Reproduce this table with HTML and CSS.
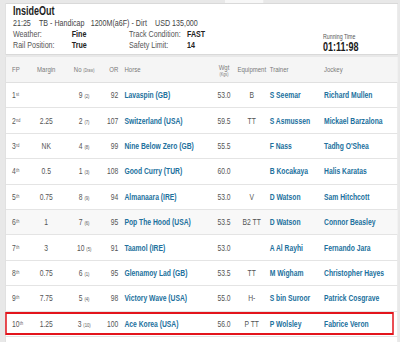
FILE: index.html
```html
<!DOCTYPE html>
<html>
<head>
<meta charset="utf-8">
<link rel="stylesheet" href="styles.css">
</head>
<body>
<div class="viewport">
<div class="page">
  <div class="tabs"><span class="tab-gap"></span></div>
  <header class="race">
    <div class="race-info">
      <h1 class="title">InsideOut</h1>
      <div class="meta">
        <span class="m1">21:25</span><span class="m2">TB - Handicap</span><span class="m3">1200M(a6F) - Dirt</span><span>USD 135,000</span>
      </div>
      <div class="cond">
        <span class="lbl">Weather:</span><span class="val">Fine</span><span class="lbl">Track Condition:</span><span class="val">FAST</span>
        <span class="lbl">Rail Position:</span><span class="val">True</span><span class="lbl">Safety Limit:</span><span class="val">14</span>
      </div>
    </div>
    <div class="run">
      <div class="run-label">Running Time</div>
      <div class="run-time">01:11:98</div>
    </div>
  </header>
  <section class="results">
    <div class="row head">
      <span class="c-fp">FP</span>
      <span class="c-mg">Margin</span>
      <span class="c-no">No <small>(Draw)</small></span>
      <span class="c-or">OR</span>
      <span class="c-horse">Horse</span>
      <span class="c-wgt"><span class="stack">Wgt<small>(Kgs)</small></span></span>
      <span class="c-eq">Equipment</span>
      <span class="c-tr">Trainer</span>
      <span class="c-jk">Jockey</span>
    </div>
    <div class="row">
      <span class="c-fp">1<sup>st</sup></span><span class="c-mg"></span><span class="c-no">9 <small>(2)</small></span><span class="c-or">92</span>
      <span class="c-horse link">Lavaspin (GB)</span><span class="c-wgt">53.0</span><span class="c-eq">B</span>
      <span class="c-tr link">S Seemar</span><span class="c-jk link">Richard Mullen</span>
    </div>
    <div class="row">
      <span class="c-fp">2<sup>nd</sup></span><span class="c-mg">2.25</span><span class="c-no">2 <small>(7)</small></span><span class="c-or">107</span>
      <span class="c-horse link">Switzerland (USA)</span><span class="c-wgt">59.5</span><span class="c-eq">TT</span>
      <span class="c-tr link">S Asmussen</span><span class="c-jk link">Mickael Barzalona</span>
    </div>
    <div class="row">
      <span class="c-fp">3<sup>rd</sup></span><span class="c-mg">NK</span><span class="c-no">4 <small>(8)</small></span><span class="c-or">99</span>
      <span class="c-horse link">Nine Below Zero (GB)</span><span class="c-wgt">55.5</span><span class="c-eq"></span>
      <span class="c-tr link">F Nass</span><span class="c-jk link">Tadhg O'Shea</span>
    </div>
    <div class="row">
      <span class="c-fp">4<sup>th</sup></span><span class="c-mg">0.5</span><span class="c-no">1 <small>(3)</small></span><span class="c-or">108</span>
      <span class="c-horse link">Good Curry (TUR)</span><span class="c-wgt">60.0</span><span class="c-eq"></span>
      <span class="c-tr link">B Kocakaya</span><span class="c-jk link">Halis Karatas</span>
    </div>
    <div class="row">
      <span class="c-fp">5<sup>th</sup></span><span class="c-mg">0.75</span><span class="c-no">8 <small>(9)</small></span><span class="c-or">94</span>
      <span class="c-horse link">Almanaara (IRE)</span><span class="c-wgt">53.0</span><span class="c-eq">V</span>
      <span class="c-tr link">D Watson</span><span class="c-jk link">Sam Hitchcott</span>
    </div>
    <div class="row shaded">
      <span class="c-fp">6<sup>th</sup></span><span class="c-mg">1</span><span class="c-no">7 <small>(6)</small></span><span class="c-or">95</span>
      <span class="c-horse link">Pop The Hood (USA)</span><span class="c-wgt">53.5</span><span class="c-eq">B2 TT</span>
      <span class="c-tr link">D Watson</span><span class="c-jk link">Connor Beasley</span>
    </div>
    <div class="row">
      <span class="c-fp">7<sup>th</sup></span><span class="c-mg">3</span><span class="c-no">10 <small>(5)</small></span><span class="c-or">91</span>
      <span class="c-horse link">Taamol (IRE)</span><span class="c-wgt">53.0</span><span class="c-eq"></span>
      <span class="c-tr link">A Al Rayhi</span><span class="c-jk link">Fernando Jara</span>
    </div>
    <div class="row">
      <span class="c-fp">8<sup>th</sup></span><span class="c-mg">0.75</span><span class="c-no">6 <small>(1)</small></span><span class="c-or">95</span>
      <span class="c-horse link">Glenamoy Lad (GB)</span><span class="c-wgt">53.5</span><span class="c-eq">TT</span>
      <span class="c-tr link">M Wigham</span><span class="c-jk link">Christopher Hayes</span>
    </div>
    <div class="row">
      <span class="c-fp">9<sup>th</sup></span><span class="c-mg">7.75</span><span class="c-no">5 <small>(4)</small></span><span class="c-or">98</span>
      <span class="c-horse link">Victory Wave (USA)</span><span class="c-wgt">55.0</span><span class="c-eq">H-</span>
      <span class="c-tr link">S bin Suroor</span><span class="c-jk link">Patrick Cosgrave</span>
    </div>
    <div class="row win">
      <span class="c-fp">10<sup>th</sup></span><span class="c-mg">1.25</span><span class="c-no">3 <small>(10)</small></span><span class="c-or">100</span>
      <span class="c-horse link">Ace Korea (USA)</span><span class="c-wgt">56.0</span><span class="c-eq">P TT</span>
      <span class="c-tr link">P Wolsley</span><span class="c-jk link">Fabrice Veron</span>
    </div>
  </section>
</div>
</div>
</body>
</html>
```

FILE: styles.css
```css
html, body {
  margin: 0;
  padding: 0;
  overflow: hidden;
}

body {
  width: 400px;
  height: 342px;
  background: #e8e8e8;
  font-family: "Liberation Sans", Arial, sans-serif;
  color: #555;
}

.viewport {
  width: 400px;
  height: 342px;
  overflow: hidden;
}

.page {
  width: 533.33px;
  box-sizing: border-box;
  padding: 0 2.67px 0 6.67px;
  transform: scaleX(0.75);
  transform-origin: 0 0;
}

.tabs {
  height: 3px;
  display: flex;
}

.tab-gap {
  margin-left: 293.3px;
  width: 50.7px;
  background: #f7f7f7;
}

/* ---------- race header ---------- */
.race {
  height: 52px;
  box-sizing: border-box;
  background: #fff;
  border: 1px solid #d9d9d9;
  padding: 1.3px 0 0 9.67px;
  display: flex;
}

.race-info {
  flex: 1;
}

.title {
  margin: 0;
  font-size: 12px;
  line-height: 13px;
  font-weight: bold;
  color: #1e1e1e;
}

.meta {
  display: flex;
  font-size: 9.5px;
  line-height: 10px;
  color: #444;
  white-space: nowrap;
}

.m1 { width: 34.7px; }
.m2 { width: 68.9px; }
.m3 { width: 85.8px; }

.cond {
  display: grid;
  grid-template-columns: 78.3px 76.4px 77.3px auto;
  font-size: 9.5px;
  line-height: 11px;
  white-space: nowrap;
}

.cond .lbl { color: #555; }
.cond .val { color: #222; font-weight: bold; }

.run {
  width: 99px;
  padding-top: 27.5px;
  box-sizing: border-box;
}

.run-label {
  font-size: 7px;
  line-height: 8px;
  color: #555;
}

.run-time {
  font-size: 12px;
  line-height: 12px;
  font-weight: bold;
  color: #1a1a1a;
}

/* ---------- results ---------- */
.results {
  margin-top: 2px;
  background: #fff;
  border-left: 1px solid #d9d9d9;
  border-right: 1px solid #d9d9d9;
  height: 290px;
}

.row {
  display: grid;
  grid-template-columns: 30px 48px 53px 19px 126px 30px 44px 74px 98px;
  align-items: center;
  height: 25.4px;
  box-sizing: border-box;
  border-bottom: 1px solid #e4e4e4;
  font-size: 9px;
  white-space: nowrap;
  color: #555;
}

.row.head {
  height: 26px;
  background: #f5f5f5;
  font-size: 8px;
  color: #7a7a7a;
  border-bottom-color: #e0e0e0;
}

.row.shaded {
  background: #f8f8f8;
}

.row small {
  font-size: 5.5px;
}

.row.head .c-no small {
  font-size: 5px;
}

.c-fp { padding-left: 8.3px; }
.c-mg { text-align: center; }
.c-no { text-align: center; }
.c-or { text-align: right; }
.c-horse { padding-left: 8.3px; }
.c-wgt { text-align: center; }
.c-eq { text-align: center; }
.c-tr { padding-left: 2px; }
.c-jk { padding-left: 0.4px; }

sup {
  font-size: 5px;
  vertical-align: 2px;
  margin-left: 0.5px;
}

.stack {
  display: inline-flex;
  flex-direction: column;
  align-items: center;
  line-height: 7px;
}

.stack small {
  font-size: 5px;
  line-height: 6px;
}

.link {
  color: #21709d;
  font-weight: bold;
}

.row.win {
  position: relative;
}

.row.win::after {
  content: "";
  position: absolute;
  left: -1px;
  top: 0;
  width: 518.3px;
  height: 23.5px;
  box-sizing: border-box;
  border: 2px solid #e3141c;
  border-left-width: 2.67px;
  border-right-width: 2.67px;
}
```
